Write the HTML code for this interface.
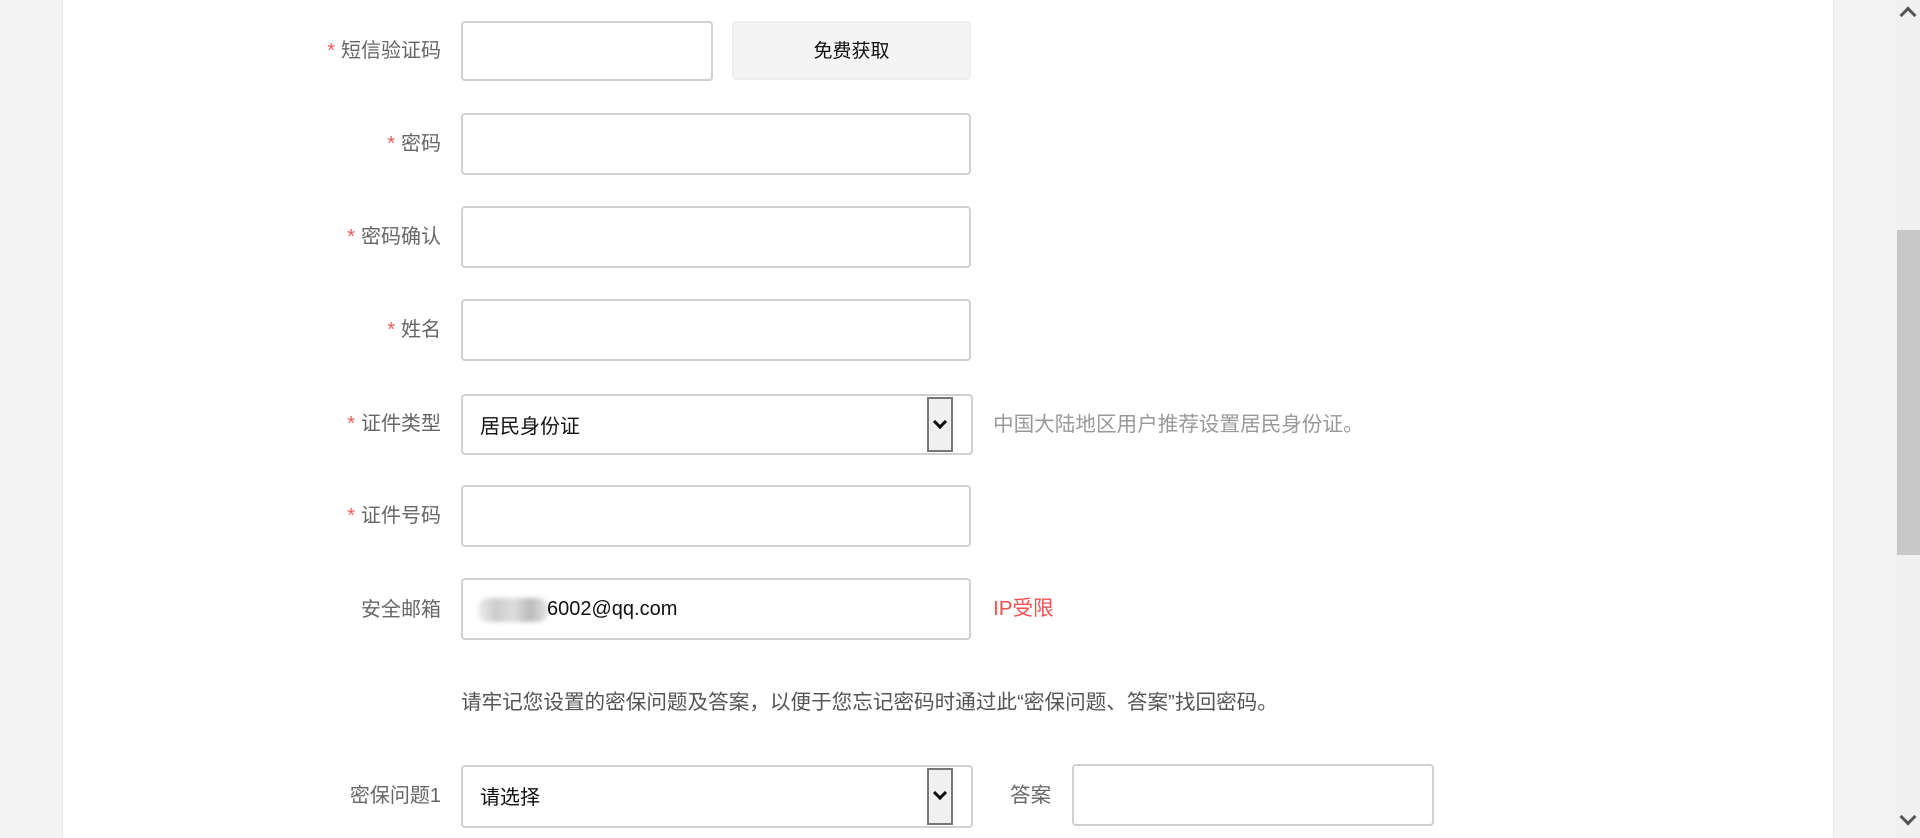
<!DOCTYPE html>
<html><head><meta charset="utf-8"><style>
body{margin:0;width:1920px;height:838px;overflow:hidden;background:#f3f3f3;font-family:"Liberation Sans","Noto Sans CJK SC",sans-serif;position:relative}
.panel{position:absolute;left:62px;top:0;width:1770px;height:838px;background:#fff;border-left:1px solid #e8e8e8;border-right:1px solid #e8e8e8}
.lab{position:absolute;right:1479px;font-size:20px;color:#666;line-height:24px;white-space:nowrap}
.lab i{font-style:normal;color:#f05a5a;margin-right:6px}
.in{position:absolute;box-sizing:border-box;border:2px solid #d0d0d0;border-radius:4px;background:#fff}
.sel{font-size:20px;color:#111;line-height:62px;padding-left:17px}
.arr{position:absolute;right:18px;top:1px;width:26px;bottom:1px;background:#f0f0f0;border:2px solid #777;box-sizing:border-box}
.arr:after{content:"";position:absolute;left:6px;top:18px;width:7px;height:7px;border-right:3px solid #111;border-bottom:3px solid #111;transform:rotate(45deg)}
.t{position:absolute;font-size:20.6px;line-height:24px;white-space:nowrap}
.sb{position:absolute;right:0;top:0;width:24px;height:838px;background:#f0f0f0}
</style></head><body>
<div class="panel"></div>
<div class="lab" style="top:39px"><i>*</i>短信验证码</div>
<div class="in" style="left:461px;top:21px;width:252px;height:60px"></div>
<div class="in" style="left:732px;top:21px;width:239px;height:59px;background:#f4f4f4;border-color:#eee;font-size:19px;text-align:center;line-height:58px;color:#111">免费获取</div>
<div class="lab" style="top:132px"><i>*</i>密码</div>
<div class="in" style="left:461px;top:113px;width:510px;height:62px"></div>
<div class="lab" style="top:225px"><i>*</i>密码确认</div>
<div class="in" style="left:461px;top:206px;width:510px;height:62px"></div>
<div class="lab" style="top:318px"><i>*</i>姓名</div>
<div class="in" style="left:461px;top:299px;width:510px;height:62px"></div>
<div class="lab" style="top:412px"><i>*</i>证件类型</div>
<div class="in sel" style="left:461px;top:394px;width:512px;height:61px">居民身份证<div class="arr"></div></div>
<div class="t" style="left:993px;top:413px;color:#999">中国大陆地区用户推荐设置居民身份证。</div>
<div class="lab" style="top:504px"><i>*</i>证件号码</div>
<div class="in" style="left:461px;top:485px;width:510px;height:62px"></div>
<div class="lab" style="top:598px">安全邮箱</div>
<div class="in" style="left:461px;top:578px;width:510px;height:62px">
<div style="position:absolute;left:15px;top:18px;width:70px;height:24px;background:linear-gradient(90deg,#eee,#ccc,#ddd,#bbb,#e5e5e5);border-radius:10px;filter:blur(2px)"></div>
<div style="position:absolute;left:84px;top:18px;font-size:20px;color:#111">6002@qq.com</div></div>
<div class="t" style="left:993px;top:597px;color:#f05050">IP受限</div>
<div class="t" style="left:461px;top:691px;color:#555">请牢记您设置的密保问题及答案，以便于您忘记密码时通过此“密保问题、答案”找回密码。</div>
<div class="lab" style="top:784px">密保问题1</div>
<div class="in sel" style="left:461px;top:765px;width:512px;height:63px">请选择<div class="arr"></div></div>
<div class="t" style="left:1010px;top:784px;color:#666">答案</div>
<div class="in" style="left:1072px;top:764px;width:362px;height:62px"></div>
<div class="sb"><div style="position:absolute;left:1px;top:230px;width:23px;height:325px;background:#c8c8c8"></div>
<div style="position:absolute;left:6px;top:9px;width:9px;height:9px;border-left:3px solid #555;border-top:3px solid #555;transform:rotate(45deg)"></div>
<div style="position:absolute;left:6px;top:811px;width:9px;height:9px;border-right:3px solid #555;border-bottom:3px solid #555;transform:rotate(45deg)"></div></div>
</body></html>
